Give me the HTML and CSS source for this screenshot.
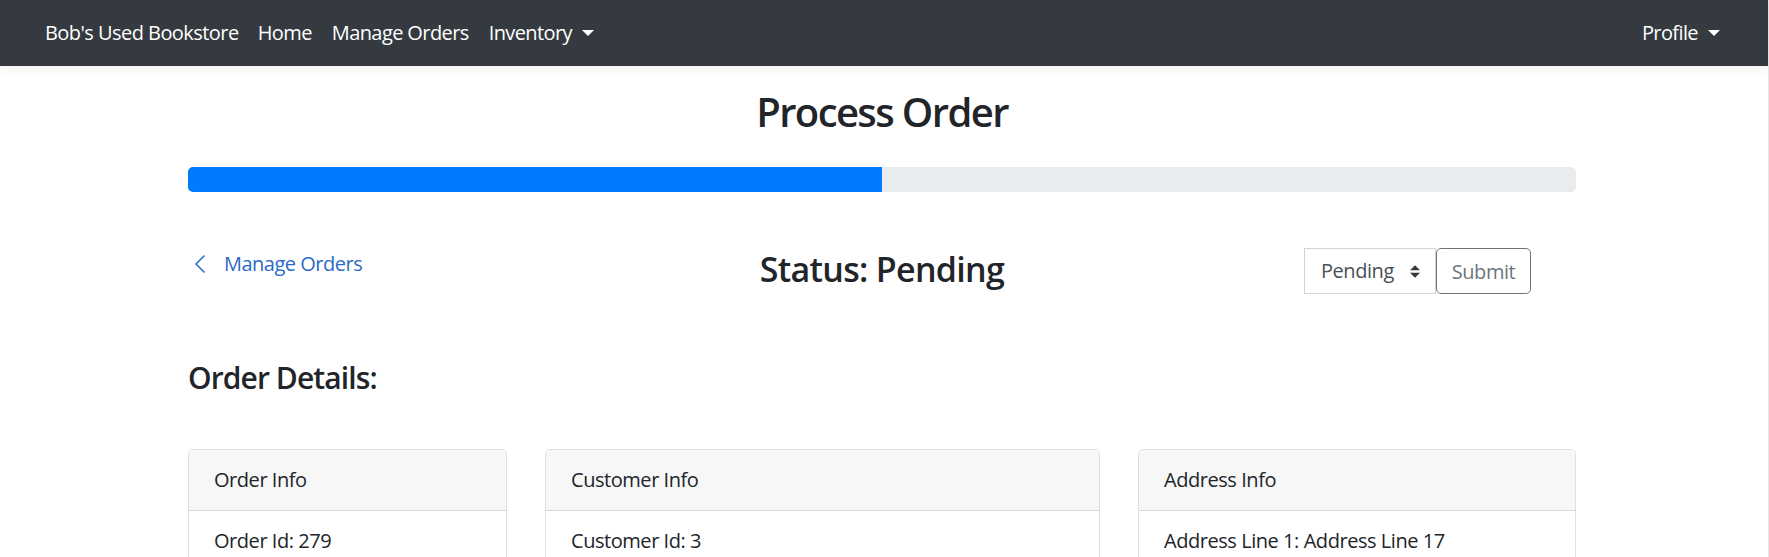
FILE: index.html
```html
<!DOCTYPE html>
<html lang="en">
<head>
<meta charset="utf-8">
<title>Process Order</title>
<link rel="stylesheet" href="styles.css">
</head>
<body>
<div class="page">
  <nav class="navbar">
    <div class="nav-left">
      <a class="brand" href="#">Bob's Used Bookstore</a>
      <a class="nav-link" href="#">Home</a>
      <a class="nav-link" href="#">Manage Orders</a>
      <a class="nav-link dropdown" href="#">Inventory<span class="caret"></span></a>
    </div>
    <div class="nav-right">
      <a class="nav-link dropdown" href="#">Profile<span class="caret"></span></a>
    </div>
  </nav>

  <main class="container">
    <h1 class="title">Process Order</h1>
    <div class="progress"><div class="progress-fill" style="width:50%"></div></div>

    <div class="status-row">
      <a class="back-link" href="#">
        <svg class="chev" width="12" height="18" viewBox="0 0 12 18"><polyline points="10,1 2,9 10,17" fill="none" stroke="currentColor" stroke-width="1.6" stroke-linecap="round" stroke-linejoin="round"/></svg>
        <span>Manage Orders</span>
      </a>
      <h3 class="status">Status: Pending</h3>
      <div class="status-form">
        <div class="select">
          <span>Pending</span>
          <svg class="sel-arrows" width="10" height="13" viewBox="0 0 4 5"><path d="M2 0L0 2h4zm0 5L0 3h4z" fill="#343a40"/></svg>
        </div>
        <button class="btn-submit" type="button">Submit</button>
      </div>
    </div>

    <h4 class="section-title">Order Details:</h4>

    <div class="cards">
      <div class="card">
        <div class="card-header">Order Info</div>
        <ul class="list">
          <li>Order Id: 279</li>
          <li>Order Date: 1/14/2021</li>
          <li>Subtotal: $42.00</li>
        </ul>
      </div>
      <div class="card">
        <div class="card-header">Customer Info</div>
        <ul class="list">
          <li>Customer Id: 3</li>
          <li>Name: Customer 3</li>
          <li>Email: customer3@example.com</li>
        </ul>
      </div>
      <div class="card">
        <div class="card-header">Address Info</div>
        <ul class="list">
          <li>Address Line 1: Address Line 17</li>
          <li>Address Line 2: Address Line 27</li>
          <li>City: Seattle</li>
        </ul>
      </div>
    </div>
  </main>
</div>
</body>
</html>
```

FILE: styles.css
```css
* { box-sizing: border-box; }

html, body {
  margin: 0;
  padding: 0;
  background: #fff;
}

body {
  font-family: "Open Sans", "Noto Sans", sans-serif;
  font-size: 20px;
  line-height: 1.5;
  color: #212529;
  overflow: hidden;
}

.page {
  border-right: 1px solid #e6e6e6;
  min-height: 557px;
}

a { text-decoration: none; }

/* Navbar */
.navbar {
  height: 66px;
  background: #343a40;
  display: flex;
  align-items: center;
  justify-content: space-between;
  padding: 0 38px 0 45px;
  box-shadow: 0 3px 12px rgba(0, 0, 0, 0.06);
}

.nav-left, .nav-right {
  display: flex;
  align-items: center;
}

.brand {
  color: #fff;
  font-size: 20px;
  letter-spacing: -0.55px;
  margin-right: 9px;
}

.nav-link {
  color: #fff;
  padding: 0 10px;
  letter-spacing: -0.6px;
  display: flex;
  align-items: center;
}

.caret {
  display: inline-block;
  width: 0;
  height: 0;
  margin-left: 10px;
  border-top: 6px solid #fff;
  border-left: 6px solid transparent;
  border-right: 6px solid transparent;
}

/* Container */
.container {
  width: 1426px;
  margin: 0 auto;
  padding: 0 19px;
  position: relative;
  left: -2px;
}

.title {
  margin: 22px 0 0;
  font-size: 40px;
  line-height: 48px;
  font-weight: 600;
  text-align: center;
  letter-spacing: -1.6px;
}

.progress {
  margin-top: 31px;
  height: 25px;
  border-radius: 5px;
  background: #e9ecef;
  overflow: hidden;
}

.progress-fill {
  height: 100%;
  background: #007bff;
}

/* Status row */
.status-row {
  margin-top: 56px;
  display: grid;
  grid-template-columns: 1fr auto 1fr;
  align-items: start;
}

.back-link {
  color: #2a6ac8;
  display: flex;
  align-items: center;
  height: 30px;
  margin-top: 1px;
  padding-left: 6px;
  letter-spacing: -0.5px;
}

.chev {
  margin-right: 18px;
}

.status {
  margin: 0;
  font-size: 34px;
  line-height: 42px;
  font-weight: 600;
  letter-spacing: -0.7px;
}

.status-form {
  display: flex;
  justify-content: flex-end;
  padding-right: 45px;
}

.select {
  width: 132px;
  height: 46px;
  border: 1px solid #ced4da;
  color: #495057;
  display: flex;
  align-items: center;
  justify-content: space-between;
  padding: 0 15px 0 16px;
  letter-spacing: -0.45px;
  background: #fff;
}

.btn-submit {
  height: 46px;
  width: 95px;
  font-family: inherit;
  font-size: 20px;
  letter-spacing: -0.45px;
  color: #6c757d;
  background: #fff;
  border: 1px solid #6c757d;
  border-radius: 5px;
  padding: 0;
}

.section-title {
  margin: 66px 0 0;
  font-size: 30px;
  line-height: 36px;
  font-weight: 600;
  letter-spacing: -0.9px;
}

/* Cards */
.cards {
  margin-top: 53px;
  display: grid;
  grid-template-columns: 319px 555px 1fr;
  gap: 38px;
}

.card {
  border: 1px solid rgba(0, 0, 0, 0.125);
  border-radius: 5px;
  overflow: hidden;
}

.card-header {
  background: #f7f7f7;
  padding: 15px 25px;
  border-bottom: 1px solid rgba(0, 0, 0, 0.125);
  letter-spacing: -0.45px;
}

.list {
  list-style: none;
  margin: 0;
  padding: 0;
}

.list li {
  padding: 15px 25px;
  border-bottom: 1px solid rgba(0, 0, 0, 0.125);
  letter-spacing: -0.45px;
}

.list li:last-child { border-bottom: 0; }
```
